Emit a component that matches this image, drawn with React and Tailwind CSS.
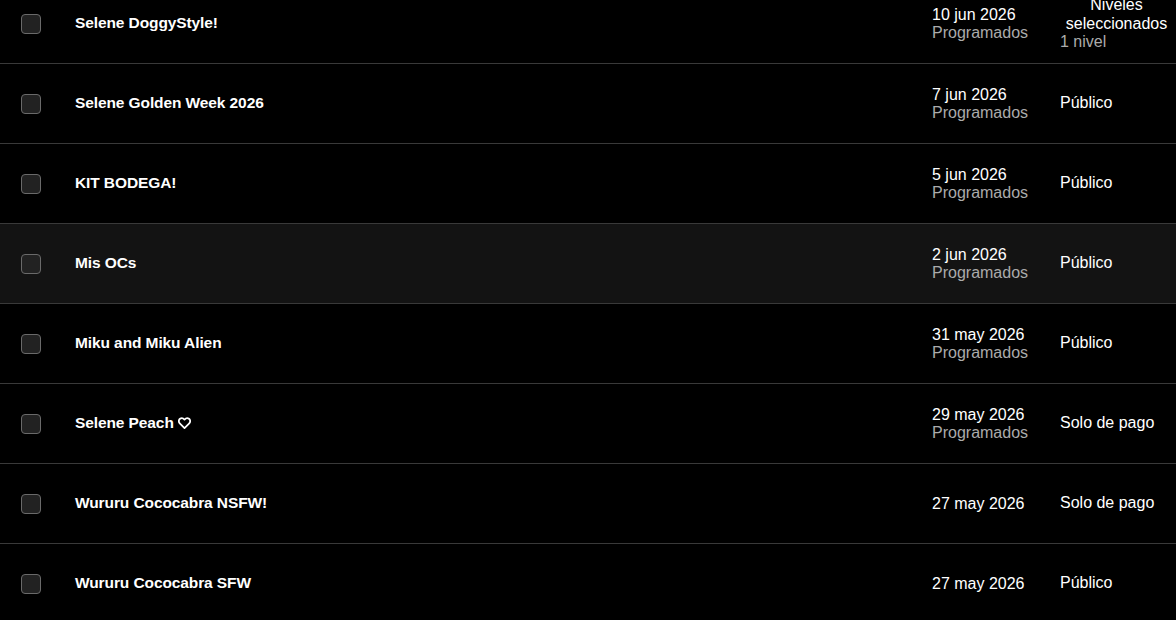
import React from "react";

const Heart = () => (
  <svg
    width="13"
    height="12"
    viewBox="0 0 24 22"
    className="inline-block ml-[4px] -mt-[2px] align-middle"
    fill="none"
    stroke="white"
    strokeWidth="3.2"
    strokeLinejoin="round"
  >
    <path d="M12 20.5 L3.2 11.6 C0.8 9.1 1 5.2 3.6 3.2 C6.1 1.3 9.6 1.9 12 4.8 C14.4 1.9 17.9 1.3 20.4 3.2 C23 5.2 23.2 9.1 20.8 11.6 Z" />
  </svg>
);

const rows = [
  { title: "Selene DoggyStyle!", date: "10 jun 2026", scheduled: true, vis: "levels" },
  { title: "Selene Golden Week 2026", date: "7 jun 2026", scheduled: true, vis: "Público" },
  { title: "KIT BODEGA!", date: "5 jun 2026", scheduled: true, vis: "Público" },
  { title: "Mis OCs", date: "2 jun 2026", scheduled: true, vis: "Público", hover: true },
  { title: "Miku and Miku Alien", date: "31 may 2026", scheduled: true, vis: "Público" },
  { title: "Selene Peach", heart: true, date: "29 may 2026", scheduled: true, vis: "Solo de pago" },
  { title: "Wururu Cococabra NSFW!", date: "27 may 2026", scheduled: false, vis: "Solo de pago" },
  { title: "Wururu Cococabra SFW", date: "27 may 2026", scheduled: false, vis: "Público" },
];

function Row({ r }) {
  return (
    <div
      className={`flex items-center h-[80px] border-b border-[#393939] ${
        r.hover ? "bg-[#131313]" : "bg-black"
      }`}
    >
      <div className="w-[75px] pl-[21px] flex items-center">
        <div className="w-[20px] h-[20px] rounded-[4px] border border-[#6a6a6a] bg-[#222222]" />
      </div>
      <div className="flex-1 text-white font-bold text-[15.5px] tracking-[-0.1px] -mt-[2px]">
        {r.title}
        {r.heart && <Heart />}
      </div>
      <div className="w-[128px] text-[16px] leading-[18px]">
        <div className="text-white">{r.date}</div>
        {r.scheduled && <div className="text-[#ababab]">Programados</div>}
      </div>
      <div className="w-[116px] text-[16px] leading-[18px] text-white -mt-[1px]">
        {r.vis === "levels" ? (
          <div>
            <div className="w-[113px] text-center leading-[19px]">Niveles seleccionados</div>
            <div className="text-[#ababab]">1 nivel</div>
          </div>
        ) : (
          <div>{r.vis}</div>
        )}
      </div>
    </div>
  );
}

export default function App() {
  return (
    <div
      className="w-[1176px] h-[620px] overflow-hidden bg-black"
      style={{ fontFamily: '"Liberation Sans", Arial, sans-serif' }}
    >
      <div className="-mt-[16px]">
        {rows.map((r, i) => (
          <Row key={i} r={r} />
        ))}
      </div>
    </div>
  );
}
